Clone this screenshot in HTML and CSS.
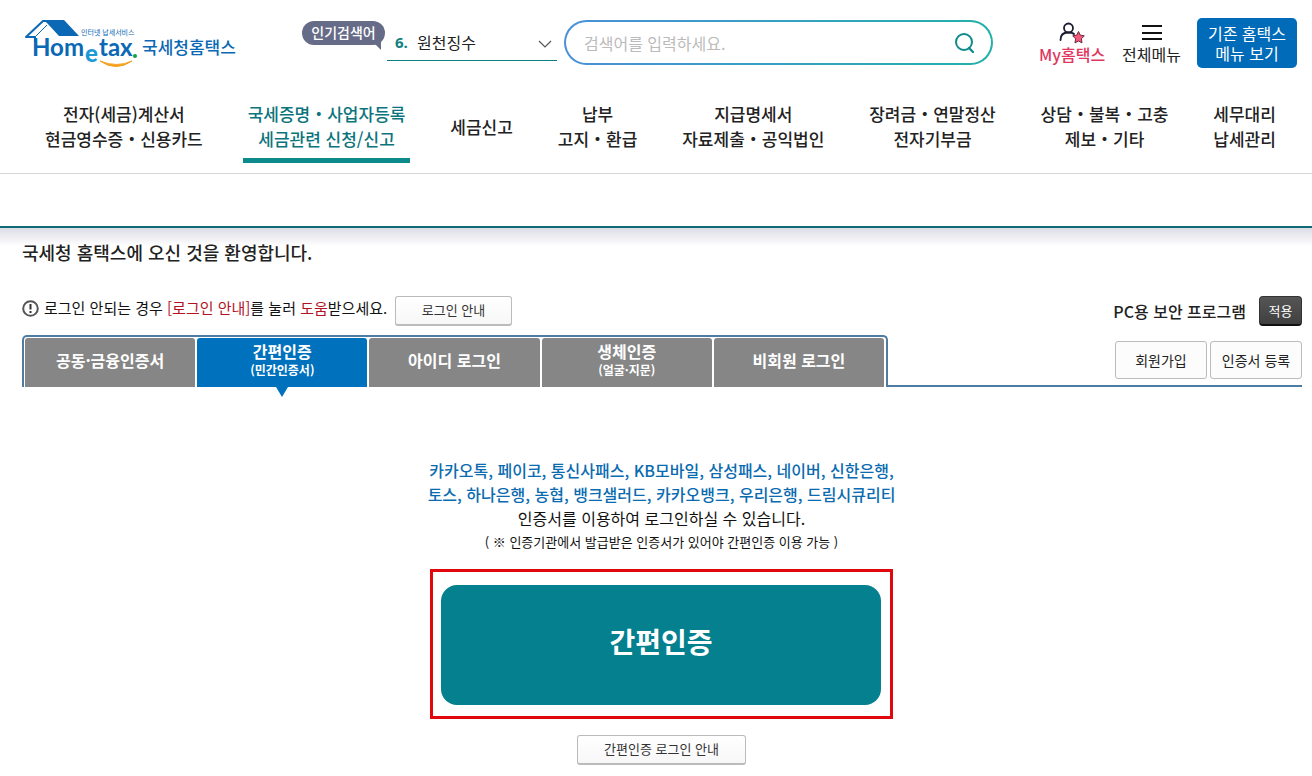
FILE: index.html
```
<!DOCTYPE html>
<html lang="ko">
<head>
  <meta charset="UTF-8" />
  <meta name="viewport" content="width=device-width, initial-scale=1.0" />
  <title>국세청 홈택스</title>
  <link rel="stylesheet" href="styles.css">
</head>
<body>
  <header>
    <div class="top">
      <a href="#" class="logo" aria-label="Hometax 국세청홈택스">
        <svg width="212" height="50" viewBox="0 0 212 50">
          <path d="M11 24 V19 H2 L19 3 H24" fill="none" stroke="#0a68b4" stroke-width="2" stroke-linejoin="round"/>
          <path d="M11 19 L23 7" fill="none" stroke="#0a68b4" stroke-width="1"/>
          <path d="M19 2 H40 L55 18 H35 L23 5 Z" fill="#0a68b4"/>
          <text x="57" y="17" class="logo-sub">인터넷 납세서비스</text>
          <text x="8" y="38" class="logo-word">Hom</text>
          <text x="61" y="44" class="logo-e">e</text>
          <text x="75" y="38" class="logo-word">tax</text>
          <circle cx="111" cy="38" r="2" fill="#12a04a"/>
          <path d="M76 43 Q92 54 108 43 Q93 50 76 43 Z" fill="#f5a11c" stroke="#f5a11c"/>
          <text x="118" y="36" class="logo-kor">국세청홈택스</text>
        </svg>
      </a>

      <div class="popular">
        <span class="badge">인기검색어</span>
        <div class="keyword">
          <label for="keyword">6.</label>
          <select id="keyword">
            <option>원천징수</option>
          </select>
          <svg class="arrow" width="14" height="8" viewBox="0 0 14 8"><path d="M1 1 L7 7 L13 1" fill="none" stroke="#555" stroke-width="1.2"/></svg>
        </div>
      </div>

      <form class="search">
        <input type="text" placeholder="검색어를 입력하세요." aria-label="검색어">
        <button type="button" aria-label="검색">
          <svg width="22" height="22" viewBox="0 0 22 22" fill="none" stroke="#0f8b8d" stroke-width="2"><circle cx="10" cy="10" r="8"/><path d="M15 16 L19 20" stroke-linecap="round" stroke-width="2.4"/></svg>
        </button>
      </form>

      <a href="#" class="tool my">
        <svg width="26" height="22" viewBox="0 0 26 22">
          <circle cx="9.500" cy="6" r="4.500" fill="none" stroke="#1c1c30" stroke-width="1.800"/>
          <path d="M1.500 18 C1.500 13 4 10.500 9 10.500 C12 10.500 14 11 15 12" fill="none" stroke="#1c1c30" stroke-width="1.800" stroke-linecap="round"/>
          <path d="M19.500 9.500 L21.300 13.200 L25.300 13.800 L22.400 16.800 L23 20.900 L19.500 19 L16 20.900 L16.600 16.800 L13.700 13.800 L17.700 13.200 Z" fill="#f4587a" stroke="#6b2a42" stroke-width="1"/>
        </svg>
        My홈택스
      </a>
      <a href="#" class="tool">
        <svg width="20" height="22" viewBox="0 0 20 22" stroke="#111" stroke-width="2"><path d="M0 4 H20 M0 11 H20 M0 17 H20"/></svg>
        전체메뉴
      </a>
      <button type="button" class="old">기존 홈택스<br>메뉴 보기</button>
    </div>

    <nav>
      <a href="#">전자(세금)계산서<br>현금영수증・신용카드</a>
      <a href="#" class="active">국세증명・사업자등록<br>세금관련 신청/신고</a>
      <a href="#">세금신고</a>
      <a href="#">납부<br>고지・환급</a>
      <a href="#">지급명세서<br>자료제출・공익법인</a>
      <a href="#">장려금・연말정산<br>전자기부금</a>
      <a href="#">상담・불복・고충<br>제보・기타</a>
      <a href="#">세무대리<br>납세관리</a>
    </nav>
  </header>

  <main>
    <h1>국세청 홈택스에 오신 것을 환영합니다.</h1>

    <div class="notice">
      <svg width="17" height="17" viewBox="0 0 17 17"><circle cx="8.500" cy="8.500" r="7.300" fill="none" stroke="#555" stroke-width="2"/><path d="M8.500 4 V9.500 M8.500 11 V13" stroke="#333" stroke-width="2"/></svg>
      <p>로그인 안되는 경우 <em>[로그인 안내]</em>를 눌러 <em>도움</em>받으세요.</p>
      <button type="button" class="btn guide">로그인 안내</button>
      <span class="security">PC용 보안 프로그램</span>
      <button type="button" class="apply">적용</button>
    </div>

    <div class="tab-row">
      <div class="tabs">
        <button type="button">공동·금융인증서</button>
        <button type="button" class="on">간편인증<small>(민간인증서)</small></button>
        <button type="button">아이디 로그인</button>
        <button type="button">생체인증<small>(얼굴·지문)</small></button>
        <button type="button">비회원 로그인</button>
      </div>
      <div class="join">
        <button type="button">회원가입</button>
        <button type="button">인증서 등록</button>
      </div>
    </div>

    <section class="login">
      <p class="agency">카카오톡, 페이코, 통신사패스, KB모바일, 삼성패스, 네이버, 신한은행,<br>토스, 하나은행, 농협, 뱅크샐러드, 카카오뱅크, 우리은행, 드림시큐리티</p>
      <p>인증서를 이용하여 로그인하실 수 있습니다.</p>
      <p class="desc">( ※ 인증기관에서 발급받은 인증서가 있어야 간편인증 이용 가능 )</p>
      <div class="focus">
        <button type="button">간편인증</button>
      </div>
      <button type="button" class="btn wide">간편인증 로그인 안내</button>
    </section>
  </main>
</body>
</html>
```
FILE: styles.css
```
* {
  margin: 0;
  padding: 0;
  box-sizing: border-box;
}
body {
  background: #fff;
  color: #222;
  font-family: "Noto Sans CJK KR", sans-serif;
  font-size: 15px;
  line-height: 24px;
}
button, input, select {
  font-family: inherit;
}
button {
  cursor: pointer;
}
a {
  color: inherit;
  text-decoration: none;
}

/* header */
.top {
  display: flex;
  padding: 18px 15px 0 24px;
  height: 102px;
  align-items: flex-start;
}
.logo {
  margin-right: 66px;
}
.logo svg {
  display: block;
}
.logo-sub {
  font-size: 7px;
  fill: #0a68b4;
}
.logo-word {
  font-family: Lato, sans-serif;
  font-size: 24px;
  font-weight: 700;
  fill: #0a68b4;
}
.logo-e {
  font-family: Lato, sans-serif;
  font-size: 24px;
  font-weight: 900;
  fill: #1c9ad6;
}
.logo-kor {
  font-size: 17px;
  font-weight: 500;
  fill: #0a68b4;
}
.popular {
  display: flex;
  gap: 2px;
  margin-right: 7px;
}
.badge {
  position: relative;
  width: 83px;
  height: 24px;
  margin-top: 3px;
  border-radius: 12px;
  background: #666b88;
  color: #fff;
  font-size: 14px;
  font-weight: 500;
  line-height: 22px;
  text-align: center;
}
.badge::after {
  content: "";
  position: absolute;
  right: 4px;
  bottom: -5px;
  border-top: 8px solid #666b88;
  border-left: 8px solid transparent;
}
.keyword {
  position: relative;
  display: flex;
  align-items: center;
  width: 170px;
  height: 43px;
  padding: 5px 0 0 8px;
  border-bottom: 1px solid #0f8080;
}
.keyword label {
  width: 22px;
  color: #0f8080;
  font-family: "Open Sans", sans-serif;
  font-weight: 700;
}
.keyword select {
  flex: 1;
  border: 0;
  background: none;
  appearance: none;
  color: #222;
  font-size: 16px;
}
.arrow {
  position: absolute;
  right: 5px;
  top: 22px;
  pointer-events: none;
}
.search {
  display: flex;
  flex: 1;
  align-items: center;
  height: 45px;
  margin: 2px 46px 0 0;
  padding: 0 15px 0 18px;
  border: 2px solid transparent;
  border-radius: 23px;
  background: linear-gradient(#fff, #fff) padding-box, linear-gradient(90deg, #4a90d9, #22b0a8) border-box;
}
.search input {
  flex: 1;
  min-width: 0;
  border: 0;
  outline: 0;
  background: none;
  font-size: 16px;
}
.search input::placeholder {
  color: #bbb;
}
.search button {
  border: 0;
  background: none;
  line-height: 0;
}
.tool {
  display: flex;
  flex-direction: column;
  align-items: center;
  margin-right: 16px;
  padding-top: 4px;
  font-size: 16px;
  line-height: 30px;
  white-space: nowrap;
}
.tool svg {
  margin-bottom: -5px;
}
.my {
  margin-right: 17px;
  color: #e0375f;
  font-weight: 500;
}
.old {
  width: 100px;
  height: 50px;
  border: 0;
  border-radius: 5px;
  background: #006bb8;
  color: #fff;
  font-size: 16px;
  line-height: 20px;
}
nav {
  display: flex;
  justify-content: space-between;
  height: 72px;
  padding: 0 31px 10px 40px;
  border-bottom: 1px solid #d8d8d8;
}
nav a {
  display: flex;
  align-items: center;
  padding: 0 5px 8px;
  border-bottom: 5px solid transparent;
  font-size: 17px;
  line-height: 25px;
  text-align: center;
  font-weight: 500;
  white-space: nowrap;
}
nav .active {
  border-color: #0c8a8c;
  color: #0b747c;
}

/* content */
main {
  margin-top: 52px;
  padding: 12px 10px 11px 22px;
  border-top: 2px solid #0f6876;
  background: linear-gradient(#dcdce6, #fff) no-repeat;
  background-size: 100% 18px;
}
h1 {
  font-size: 18px;
  font-weight: 500;
  line-height: 24px;
}
.notice {
  display: flex;
  align-items: center;
  height: 30px;
  margin: 32px 0 9px;
  gap: 5px;
}
.notice svg {
  flex: none;
  margin-bottom: 6px;
}
.notice p {
  min-width: 346px;
  margin-bottom: 6px;
  color: #111;
}
.notice em {
  color: #b3131f;
  font-style: normal;
}
.btn {
  height: 30px;
  padding-bottom: 2px;
  border: 1px solid #bbb;
  border-bottom-width: 2px;
  border-radius: 3px;
  background: linear-gradient(#fff, #f7f7f7);
  color: #333;
  font-size: 13px;
}
.guide {
  width: 117px;
}
.security {
  margin-left: auto;
  margin-right: 8px;
  font-size: 16px;
  font-weight: 500;
}
.apply {
  width: 43px;
  height: 30px;
  border: 1px solid #333;
  border-bottom: 2px solid #111;
  border-radius: 4px;
  background: linear-gradient(#555, #404040);
  color: #fff;
  font-size: 13px;
}
.tab-row {
  display: flex;
  align-items: stretch;
  height: 52px;
}
.tabs {
  display: flex;
  flex: 0 1 866px;
  gap: 2px;
  padding: 1px 2px 0 1px;
  border: 2px solid #4f7ca3;
  border-bottom: 0;
  border-radius: 5px 5px 0 0;
}
.tabs button {
  position: relative;
  flex: 1;
  padding-bottom: 6px;
  border: 0;
  border-radius: 3px 3px 0 0;
  background: #868686;
  color: #fff;
  font-size: 16px;
  font-weight: 700;
  line-height: 20px;
}
.tabs small {
  display: block;
  font-size: 12px;
  line-height: 18px;
}
.tabs .on {
  background: #0071bd;
}
.tabs .on::after {
  content: "";
  position: absolute;
  left: 50%;
  top: 100%;
  margin-left: -6px;
  border: 6px solid transparent;
  border-top: 10px solid #0071bd;
  border-bottom: 0;
}
.join {
  display: flex;
  flex: 1;
  justify-content: flex-end;
  gap: 3px;
  padding: 6px 0;
  border-bottom: 2px solid #4f7ca3;
}
.join button {
  width: 92px;
  border: 1px solid #bbb;
  border-radius: 3px;
  background: #fcfcfc;
  color: #222;
  font-size: 14px;
}
.login {
  display: flex;
  flex-direction: column;
  align-items: center;
  padding: 71px 1px 0 0;
  color: #111;
  font-size: 16px;
  text-align: center;
}
.agency {
  color: #0a6bb0;
  font-weight: 500;
}
.login .desc {
  font-size: 13px;
}
.focus {
  margin: 15px 0 16px;
  padding: 13px 9px 11px 8px;
  border: 3px solid #e0080c;
}
.focus button {
  width: 440px;
  height: 120px;
  padding-bottom: 8px;
  border: 0;
  border-radius: 16px;
  background: #04808f;
  color: #fff;
  font-size: 28px;
  font-weight: 700;
}
.wide {
  width: 169px;
}
```
